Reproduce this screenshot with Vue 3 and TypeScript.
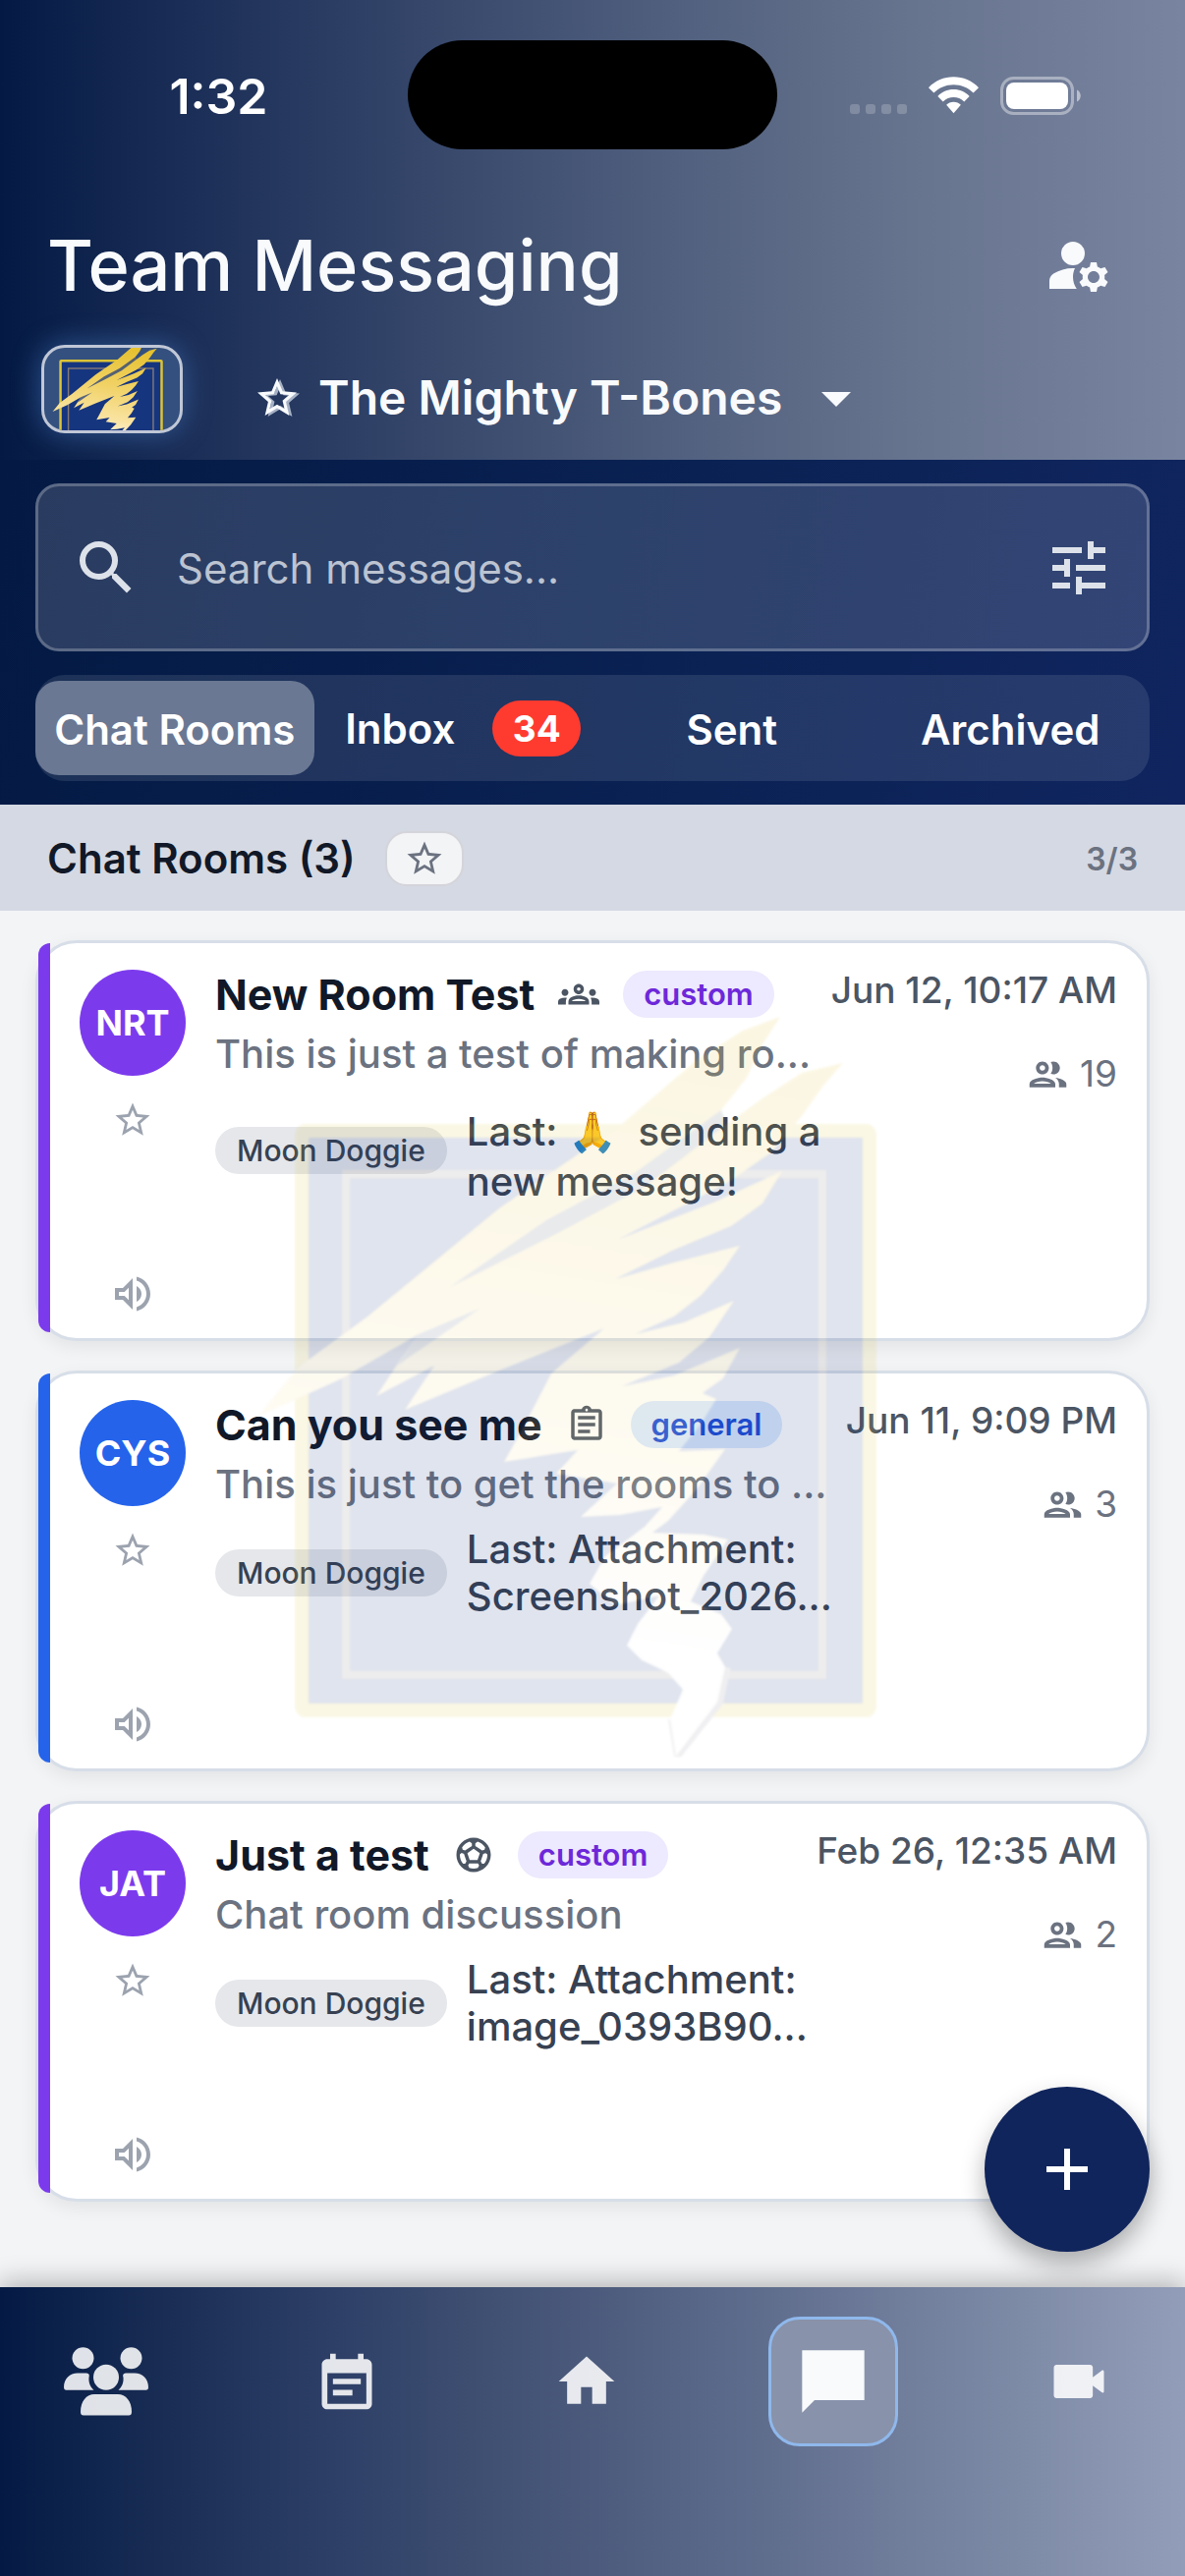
<script setup lang="ts">
import { ref } from 'vue'

interface Room {
  initials: string
  name: string
  color: string
  icon: string
  tag: string
  description: string
  sender: string
  emoji?: string
  lines: string[]
  date: string
  members: number
}

interface NavItem {
  label: string
  icon: string
}

const icons: Record<string, string> = {
  manage:
    'M10 4a4 4 0 1 0 0 8a4 4 0 1 0 0-8zM10.67 13.02C10.45 13.01 10.23 13 10 13c-2.42 0-4.68.67-6.61 1.82C2.51 15.34 2 16.32 2 17.35V20h9.26C10.47 18.87 10 17.49 10 16c0-1.07.25-2.07.67-2.98zM20.75 16c0-.22-.03-.42-.06-.63l1.14-1.01-1-1.73-1.45.49c-.32-.27-.68-.48-1.08-.63L18 11h-2l-.3 1.49c-.4.15-.76.36-1.08.63l-1.45-.49-1 1.73 1.14 1.01c-.03.21-.06.41-.06.63s.03.42.06.63l-1.14 1.01 1 1.73 1.45-.49c.32.27.68.48 1.08.63L16 21h2l.3-1.49c.4-.15.76-.36 1.08-.63l1.45.49 1-1.73-1.14-1.01c.03-.21.06-.41.06-.63zM17 18c-1.1 0-2-.9-2-2s.9-2 2-2 2 .9 2 2-.9 2-2 2z',
  star: 'M12 15.39l-3.76 2.27.99-4.28-3.32-2.88 4.38-.37L12 6.09l1.71 4.04 4.38.37-3.32 2.88.99 4.28M22 9.24l-7.19-.61L12 2 9.19 8.63 2 9.24l5.45 4.73L5.82 21 12 17.27 18.18 21l-1.64-7.03L22 9.24z',
  search:
    'M15.5 14h-.79l-.28-.27A6.471 6.471 0 0 0 16 9.5 6.5 6.5 0 1 0 9.5 16c1.61 0 3.09-.59 4.23-1.57l.27.28v.79l5 4.99L20.49 19l-4.99-5zm-6 0C7.01 14 5 11.99 5 9.5S7.01 5 9.5 5 14 7.01 14 9.5 11.99 14 9.5 14z',
  tune: 'M3 17v2h6v-2H3zM3 5v2h10V5H3zm10 16v-2h8v-2h-8v-2h-2v6h2zM7 9v2H3v2h4v2h2V9H7zm14 4v-2H11v2h10zm-6-4h2V7h4V5h-4V3h-2v6z',
  volume:
    'M3 9v6h4l5 5V4L7 9H3zm7-.17v6.34L7.83 13H5v-2h2.83L10 8.83zM16.5 12c0-1.77-1.02-3.29-2.5-4.03v8.05c1.48-.73 2.5-2.25 2.5-4.02zM14 3.23v2.06c2.89.86 5 3.54 5 6.71s-2.11 5.85-5 6.71v2.06c4.01-.91 7-4.49 7-8.77 0-4.28-2.99-7.86-7-8.77z',
  people:
    'M9 13.75c-2.34 0-7 1.17-7 3.5V19h14v-1.75c0-2.33-4.66-3.5-7-3.5zM4.34 17c.84-.58 2.87-1.25 4.66-1.25s3.82.67 4.66 1.25H4.34zM9 12c1.93 0 3.5-1.57 3.5-3.5S10.93 5 9 5 5.5 6.57 5.5 8.5 7.07 12 9 12zm0-5c.83 0 1.5.67 1.5 1.5S9.83 10 9 10s-1.5-.67-1.5-1.5S8.17 7 9 7zm7.04 6.81c1.16.84 1.96 1.96 1.96 3.44V19h4v-1.75c0-2.02-3.5-3.17-5.96-3.44zM15 12c1.93 0 3.5-1.57 3.5-3.5S16.93 5 15 5c-.54 0-1.04.13-1.5.35.63.89 1 1.98 1 3.15s-.37 2.26-1 3.15c.46.22.96.35 1.5.35z',
  groups:
    'M4 13c1.1 0 2-.9 2-2s-.9-2-2-2-2 .9-2 2 .9 2 2 2zm1.13 1.1c-.37-.06-.74-.1-1.13-.1-.99 0-1.93.21-2.78.58C.48 14.9 0 15.62 0 16.43V18h4.5v-1.61c0-.83.23-1.61.63-2.29zM20 13c1.1 0 2-.9 2-2s-.9-2-2-2-2 .9-2 2 .9 2 2 2zm4 3.43c0-.81-.48-1.53-1.22-1.85-.85-.37-1.79-.58-2.78-.58-.39 0-.76.04-1.13.1.4.68.63 1.46.63 2.29V18H24v-1.57zm-7.76-2.78c-1.17-.52-2.61-.9-4.24-.9s-3.07.39-4.24.9C6.68 14.13 6 15.21 6 16.39V18h12v-1.61c0-1.18-.68-2.26-1.76-2.74zM8.07 16c.09-.23.13-.39.91-.69.97-.38 1.99-.56 3.02-.56s2.05.18 3.02.56c.77.3.81.46.91.69H8.07zM12 8c.55 0 1 .45 1 1s-.45 1-1 1-1-.45-1-1 .45-1 1-1m0-2c-1.66 0-3 1.34-3 3s1.34 3 3 3 3-1.34 3-3-1.34-3-3-3z',
  clipboard:
    'M7 15h7v2H7zm0-4h10v2H7zm0-4h10v2H7zm12-4h-4.18C14.4 1.84 13.3 1 12 1c-1.3 0-2.4.84-2.82 2H5c-.14 0-.27.01-.4.04-.39.08-.74.28-1.01.55-.18.18-.33.4-.43.64-.1.23-.16.49-.16.77v14c0 .27.06.54.16.78s.25.45.43.64c.27.27.62.47 1.01.55.13.02.26.03.4.03h14c1.1 0 2-.9 2-2V5c0-1.1-.9-2-2-2zm-7-.25c.41 0 .75.34.75.75s-.34.75-.75.75-.75-.34-.75-.75.34-.75.75-.75zM19 19H5V5h14v14z',
  soccer:
    'M12 2C6.48 2 2 6.48 2 12s4.48 10 10 10 10-4.48 10-10S17.52 2 12 2zm1 3.3 1.35-.95c1.82.56 3.37 1.76 4.38 3.34l-.39 1.34-1.35.46L13 6.9V5.3zm-3.35-.95L11 5.3v1.6L7.01 9.49l-1.35-.46-.39-1.34c1.01-1.57 2.56-2.77 4.38-3.34zM7.08 17.11l-1.14.1C4.73 15.81 4 13.99 4 12c0-.12.01-.23.02-.35l1-.73 1.38.48 1.46 4.34-.78 1.37zm7.42 2.48c-.79.26-1.63.41-2.5.41s-1.71-.15-2.5-.41l-.69-1.49.64-1.1h5.11l.64 1.11-.7 1.48zM14.27 15H9.73l-1.35-4.02L12 8.44l3.63 2.54L14.27 15zm3.79 2.21-1.14-.1-.79-1.37 1.46-4.34 1.39-.47 1 .73c.01.11.02.22.02.34 0 1.99-.73 3.81-1.94 5.21z',
  calendar:
    'M19 4h-1V2h-2v2H8V2H6v2H5c-1.11 0-2 .9-2 2v14c0 1.1.89 2 2 2h14c1.1 0 2-.9 2-2V6c0-1.1-.9-2-2-2zm0 16H5V9h14v11zM7 11h10v2H7zM7 15h7v2H7z',
  home: 'M10 20v-6h4v6h5v-8h3L12 3 2 12h3v8z',
  chat: 'M2 2h20v16H6l-4 4z',
  video:
    'M17 10.5V7c0-.55-.45-1-1-1H4c-.55 0-1 .45-1 1v10c0 .55.45 1 1 1h12c.55 0 1-.45 1-1v-3.5l3.2 2.4c.4.3.8.1.8-.4V8.500c0-.5-.4-.7-.8-.4L17 10.500z',
}

const search = ref('')
const team = ref('bones')
const activeTab = ref('Chat Rooms')
const activeNav = ref('Messages')

const tabs: { label: string; badge?: number }[] = [
  { label: 'Chat Rooms' },
  { label: 'Inbox', badge: 34 },
  { label: 'Sent' },
  { label: 'Archived' },
]

const rooms: Room[] = [
  {
    initials: 'NRT',
    name: 'New Room Test',
    color: '#7c3aed',
    icon: 'groups',
    tag: 'custom',
    description: 'This is just a test of making ro...',
    sender: 'Moon Doggie',
    emoji: '🙏',
    lines: ['sending a', 'new message!'],
    date: 'Jun 12, 10:17 AM',
    members: 19,
  },
  {
    initials: 'CYS',
    name: 'Can you see me',
    color: '#2563eb',
    icon: 'clipboard',
    tag: 'general',
    description: 'This is just to get the rooms to ...',
    sender: 'Moon Doggie',
    lines: ['Attachment:', 'Screenshot_2026...'],
    date: 'Jun 11, 9:09 PM',
    members: 3,
  },
  {
    initials: 'JAT',
    name: 'Just a test',
    color: '#7c3aed',
    icon: 'soccer',
    tag: 'custom',
    description: 'Chat room discussion',
    sender: 'Moon Doggie',
    lines: ['Attachment:', 'image_0393B90...'],
    date: 'Feb 26, 12:35 AM',
    members: 2,
  },
]

const navItems: NavItem[] = [
  { label: 'Team', icon: 'team' },
  { label: 'Calendar', icon: 'calendar' },
  { label: 'Home', icon: 'home' },
  { label: 'Messages', icon: 'chat' },
  { label: 'Video', icon: 'video' },
]
</script>

<template>
  <div class="screen">
    <svg class="defs" aria-hidden="true">
      <defs>
        <linearGradient id="wing" gradientUnits="userSpaceOnUse" x1="560" y1="0" x2="440" y2="754">
          <stop offset="0" stop-color="#e3bd22" />
          <stop offset="0.35" stop-color="#f0d060" />
          <stop offset="0.62" stop-color="#f9e3a0" />
          <stop offset="0.85" stop-color="#ffffff" />
        </linearGradient>
        <symbol id="crest" overflow="visible">
          <rect x="81" y="117" width="578" height="590" rx="4" fill="#16357f" stroke="#dcc436" stroke-width="14" />
          <rect x="126" y="161" width="485" height="510" fill="none" stroke="#857a78" stroke-width="8" />
          <path
            fill="none"
            stroke="#8a8a9c"
            stroke-width="8"
            stroke-linejoin="round"
            d="M514 663 L506 699 L464 752 L458 716"
          />
          <path
            fill="url(#wing)"
            d="M36 408 L77 358 L148 306 L215 251 L282 196 L407 110 L483 45 L530 15 L568 1 L550 29 L534 63 L508 96 L514 110 L550 84 L590 58 L632 48 L612 71 L590 102 L559 139 L514 170 L402 228 L500 190 L570 158 L550 191 L518 214 L460 238 L400 268 L460 251 L527 234 L510 259 L487 285 L460 306 L420 324 L470 312 L521 290 L496 327 L465 353 L407 377 L460 366 L527 338 L510 369 L489 384 L503 390 L487 416 L465 443 L512 441 L483 482 L454 514 L438 526 L490 528 L515 533 L490 570 L477 596 L508 609 L519 624 L504 649 L512 663 L504 699 L462 754 L456 716 L469 686 L454 669 L427 656 L412 641 L423 619 L445 590 L400 600 L374 578 L390 550 L430 520 L448 500 L405 508 L365 510 L402 476 L340 466 L362 442 L287 454 L306 420 L335 364 L389 318 L282 361 L186 401 L216 356 L157 387 L180 352 L200 324 L120 370 Z"
          />
          <path
            fill="#16357f"
            fill-opacity="0.7"
            d="M508 96 L420 160 L330 208 L232 276 L340 222 L430 174 L514 110 Z M262 298 L200 324 L178 356 Z"
          />
        </symbol>
      </defs>
    </svg>

    <header class="header">
      <div class="status">
        <span class="clock">1:32</span>
        <span class="island"></span>
        <span class="signals">
          <span class="dots"><i></i><i></i><i></i><i></i></span>
          <svg class="wifi" viewBox="0 0 52 38" aria-hidden="true">
            <path d="M26 0C36 0 45 4 52 11L46.500 16.500C41 11 34 8 26 8S11 11 5.500 16.500L0 11C7 4 16 0 26 0Z" />
            <path d="M26 13C32.500 13 38 15.500 42.500 20L37 25.500C34 22.500 30 21 26 21S18 22.500 15 25.500L9.500 20C14 15.500 19.500 13 26 13Z" />
            <path d="M26 26C29 26 31.500 27 33.500 29L26 37.500L18.500 29C20.500 27 23 26 26 26Z" />
          </svg>
          <svg class="battery" viewBox="0 0 82 39" aria-hidden="true">
            <rect x="1.500" y="1.500" width="72" height="36" rx="12" fill="none" stroke="#fff" stroke-opacity="0.4" stroke-width="3" />
            <rect x="6" y="6" width="63" height="27" rx="8" fill="#fff" />
            <path d="M78 13.500c5 2 5 10 0 12z" fill="#fff" fill-opacity="0.5" />
          </svg>
        </span>
      </div>

      <div class="title-row">
        <h1>Team Messaging</h1>
        <button class="icon-btn" type="button" aria-label="Manage members">
          <svg class="i72" viewBox="0 0 24 24"><path :d="icons.manage" /></svg>
        </button>
      </div>

      <div class="team-row">
        <div class="logo">
          <svg viewBox="-12 43 775 472" preserveAspectRatio="xMidYMid slice" aria-hidden="true">
            <use href="#crest" />
          </svg>
        </div>
        <div class="team">
          <svg class="team-star" viewBox="0 0 24 24" aria-hidden="true"><path :d="icons.star" /></svg>
          <select v-model="team" aria-label="Team">
            <option value="bones">The Mighty T-Bones</option>
          </select>
          <svg class="i72" viewBox="0 0 24 24" aria-hidden="true"><path d="M7 10l5 5 5-5z" /></svg>
        </div>
      </div>
    </header>

    <section class="controls">
      <div class="search">
        <svg class="i72" viewBox="0 0 24 24" aria-hidden="true"><path :d="icons.search" /></svg>
        <input v-model="search" type="text" placeholder="Search messages..." aria-label="Search messages" />
        <button class="icon-btn" type="button" aria-label="Filters">
          <svg class="i72" viewBox="0 0 24 24"><path :d="icons.tune" /></svg>
        </button>
      </div>
      <nav class="tabs">
        <button
          v-for="tab in tabs"
          :key="tab.label"
          type="button"
          class="tab"
          :class="{ active: tab.label === activeTab, counted: tab.badge }"
          @click="activeTab = tab.label"
        >
          {{ tab.label }}
          <span v-if="tab.badge" class="badge">{{ tab.badge }}</span>
        </button>
      </nav>
    </section>

    <div class="summary">
      <h2>Chat Rooms (3)</h2>
      <button class="fav" type="button" aria-label="Show favorites">
        <svg viewBox="0 0 24 24"><path :d="icons.star" /></svg>
      </button>
      <span class="count">3/3</span>
    </div>

    <main class="list">
      <article v-for="room in rooms" :key="room.initials" class="card">
        <span class="stripe" :style="{ background: room.color }"></span>
        <div class="side">
          <span class="avatar" :style="{ background: room.color }">{{ room.initials }}</span>
          <button class="side-btn star" type="button" aria-label="Favorite">
            <svg viewBox="0 0 24 24"><path :d="icons.star" /></svg>
          </button>
          <button class="side-btn volume" type="button" aria-label="Mute">
            <svg viewBox="0 0 24 24"><path :d="icons.volume" /></svg>
          </button>
        </div>
        <div class="body">
          <div class="name-row">
            <h3>{{ room.name }}</h3>
            <svg viewBox="0 0 24 24" aria-hidden="true"><path :d="icons[room.icon]" /></svg>
            <span class="tag" :class="room.tag">{{ room.tag }}</span>
          </div>
          <p class="desc">{{ room.description }}</p>
          <div class="last">
            <span class="sender">{{ room.sender }}</span>
            <p class="message">
              Last: <template v-if="room.emoji"><span class="emoji">{{ room.emoji }}</span>&nbsp; </template>{{ room.lines[0] }}<br />{{ room.lines[1] }}
            </p>
          </div>
        </div>
        <div class="meta">
          <time>{{ room.date }}</time>
          <span class="members">
            <svg viewBox="0 0 24 24" aria-hidden="true"><path :d="icons.people" /></svg>
            {{ room.members }}
          </span>
        </div>
      </article>
      <button class="fab" type="button" aria-label="New chat room">
        <svg class="i72" viewBox="0 0 24 24"><path d="M19 13h-6v6h-2v-6H5v-2h6V5h2v6h6z" /></svg>
      </button>
    </main>

    <nav class="bottom">
      <button
        v-for="item in navItems"
        :key="item.label"
        type="button"
        class="nav-item"
        :class="{ active: item.label === activeNav }"
        :aria-label="item.label"
        @click="activeNav = item.label"
      >
        <svg v-if="item.icon === 'team'" class="team-icon" viewBox="0 0 86 70">
          <circle cx="19.500" cy="11.300" r="11" />
          <circle cx="68.500" cy="11.300" r="11" />
          <circle cx="43" cy="30.700" r="13" />
          <path d="M0 41C0 32 6 26.500 14 26.500H22C25 26.500 26.500 27.500 25.500 31C25 36 27 41 30.500 43.700H2Q0 43.700 0 41Z" />
          <path d="M86 41C86 32 80 26.500 72 26.500H64C61 26.500 59.500 27.500 60.500 31C61 36 59 41 55.500 43.700H84Q86 43.700 86 41Z" />
          <path d="M17 66C17 55 23 48 31 48H55C63 48 69 55 69 66Q69 69.500 66 69.500H20Q17 69.500 17 66Z" />
        </svg>
        <svg v-else viewBox="0 0 24 24"><path :d="icons[item.icon]" /></svg>
      </button>
    </nav>

    <svg class="watermark" viewBox="0 -200 754 954" aria-hidden="true">
      <use href="#crest" />
    </svg>
  </div>
</template>

<style>
body {
  margin: 0;
}
</style>

<style scoped>
.screen {
  position: relative;
  display: flex;
  flex-direction: column;
  min-height: 100vh;
  background: #f3f4f6;
  font-family: Inter, "Liberation Sans", sans-serif;
  color: #111827;
}

.screen * {
  box-sizing: border-box;
}

.defs {
  position: absolute;
  width: 0;
  height: 0;
}

h1,
h2,
h3,
p {
  margin: 0;
}

button {
  display: flex;
  align-items: center;
  justify-content: center;
  padding: 0;
  border: 0;
  background: none;
  color: inherit;
  font: inherit;
}

svg {
  display: block;
  flex: none;
  fill: currentColor;
}

.i72 {
  width: 72px;
  height: 72px;
}

.header {
  height: 468px;
  background: linear-gradient(90deg, #041a44 0%, #1b2e57 16%, #2b3d63 28%, #3e4e70 42%, #52617f 58%, #68758f 78%, #7984a0 100%);
  color: #f8fafc;
}

.status {
  display: grid;
  grid-template-columns: 1fr 376px 1fr;
  align-items: center;
  height: 192px;
}

.clock {
  padding: 4px 0 0 30px;
  color: #fff;
  font-size: 50px;
  font-weight: 600;
  line-height: 60px;
  text-align: center;
}

.island {
  height: 111px;
  border-radius: 56px;
  background: #000;
}

.signals {
  display: flex;
  align-items: center;
  padding: 2px 0 0 74px;
  color: #fff;
}

.dots {
  display: flex;
  align-items: flex-end;
  gap: 6px;
  height: 38px;
  margin-right: 22px;
}

.dots i {
  width: 10px;
  height: 10px;
  border-radius: 3px;
  background: rgba(255, 255, 255, 0.2);
}

.wifi {
  width: 51px;
  height: 38px;
  margin-right: 22px;
}

.battery {
  width: 82px;
  height: 39px;
}

.title-row {
  display: flex;
  align-items: center;
  justify-content: space-between;
  height: 156px;
  padding: 0 72px 0 48px;
}

h1 {
  font-size: 72px;
  font-weight: 500;
  line-height: 84px;
}

.team-row {
  display: flex;
  align-items: flex-start;
  padding: 3px 42px 0;
}

.logo {
  width: 144px;
  height: 90px;
  overflow: hidden;
  border: 3px solid #c0c7d6;
  border-radius: 24px;
  background: #34507e;
  box-shadow: 0 0 30px rgba(90, 150, 230, 0.45);
}

.logo svg {
  width: 100%;
  height: 100%;
}

.team {
  display: flex;
  align-items: center;
  height: 108px;
  margin-left: 72px;
}

.team-star {
  width: 48px;
  height: 48px;
  margin-right: 18px;
  filter: drop-shadow(3px 1px 0 rgba(220, 228, 240, 0.7));
}

select {
  appearance: none;
  padding: 0;
  border: 0;
  background: none;
  color: inherit;
  font: 600 48px/60px Inter, "Liberation Sans", sans-serif;
}

.team .i72 {
  margin-left: 18px;
}

.controls {
  padding: 24px 36px;
  background: linear-gradient(100deg, #041a44 0%, #0a2254 60%, #10255f 100%);
  color: #dde2ea;
}

.search {
  display: flex;
  align-items: center;
  height: 171px;
  padding: 0 33px;
  border: 3px solid rgba(255, 255, 255, 0.24);
  border-radius: 24px;
  background: rgba(255, 255, 255, 0.15);
}

.search input {
  flex: 1;
  min-width: 0;
  padding: 2px 0 0 36px;
  border: 0;
  outline: 0;
  background: none;
  color: #fff;
  font: 400 42px/60px Inter, "Liberation Sans", sans-serif;
}

.search input::placeholder {
  color: #bcc3d1;
  opacity: 1;
}

.tabs {
  display: grid;
  grid-template-columns: repeat(4, 1fr);
  margin-top: 24px;
  padding: 6px 0;
  border-radius: 30px;
  background: rgba(255, 255, 255, 0.1);
}

.tab {
  height: 96px;
  padding-top: 2px;
  border-radius: 24px;
  color: #fff;
  font-size: 42px;
  font-weight: 600;
  white-space: nowrap;
}

.tab.active {
  background: #6b7893;
}

.tab.counted {
  padding: 0 0 0 20px;
}

.badge {
  min-width: 90px;
  margin-left: 38px;
  border-radius: 30px;
  background: #ff3b30;
  font-size: 37px;
  font-weight: 700;
  line-height: 57px;
}

.summary {
  display: flex;
  align-items: center;
  height: 108px;
  padding: 2px 48px 0;
  background: #d5d9e3;
}

h2 {
  font-size: 42px;
  font-weight: 600;
  line-height: 48px;
}

.fav {
  width: 80px;
  height: 56px;
  margin-left: 30px;
  border: 2px solid #d4d4da;
  border-radius: 22px;
  background: #f3f4f6;
  color: #6b7280;
}

.fav svg {
  width: 42px;
  height: 42px;
}

.count {
  margin-left: auto;
  color: #6b7280;
  font-size: 32px;
  font-weight: 600;
}

.list {
  position: relative;
  display: flex;
  flex: 1;
  flex-direction: column;
  gap: 30px;
  padding: 30px 36px;
}

.card {
  position: relative;
  display: flex;
  min-height: 408px;
  padding: 27px 30px 21px 42px;
  border: 3px solid #d7dee8;
  border-radius: 42px;
  background: #fff;
  box-shadow: 0 6px 18px rgba(0, 0, 0, 0.07);
}

.stripe {
  position: absolute;
  top: 0;
  bottom: 6px;
  left: 0;
  width: 12px;
  border-radius: 12px 0 0 12px;
}

.side {
  display: flex;
  flex-direction: column;
  align-items: center;
  margin-right: 30px;
  color: #9ca3af;
}

.avatar {
  width: 108px;
  height: 108px;
  border-radius: 50%;
  color: #fff;
  font-size: 36px;
  font-weight: 700;
  line-height: 108px;
  text-align: center;
}

.side-btn svg {
  width: 100%;
  height: 100%;
}

.star {
  width: 42px;
  height: 42px;
  margin-top: 24px;
}

.volume {
  width: 48px;
  height: 48px;
  margin-top: auto;
}

.body {
  flex: 1;
  min-width: 0;
  white-space: nowrap;
}

.name-row {
  display: flex;
  align-items: center;
  gap: 24px;
  height: 50px;
}

h3 {
  font-size: 43px;
  font-weight: 700;
  line-height: 48px;
}

.name-row svg {
  width: 42px;
  height: 42px;
  color: #4b5563;
}

.tag,
.sender {
  flex: none;
  padding: 0 21px;
  border-radius: 24px;
  font-size: 30px;
  font-weight: 500;
  line-height: 48px;
}

.tag {
  font-size: 31px;
  font-weight: 600;
}

.tag.custom {
  background: #ede9fe;
  color: #6d28d9;
}

.tag.general {
  background: #dbeafe;
  color: #1d4ed8;
}

.desc {
  margin-top: 12px;
  color: #6b7280;
  font-size: 40px;
  font-weight: 500;
  line-height: 48px;
}

.last {
  display: flex;
  align-items: center;
  gap: 20px;
  margin-top: 18px;
}

.sender {
  padding: 0 22px;
  background: #e5e7eb;
  color: #374151;
}

.message {
  color: #374151;
  font-size: 40px;
  font-weight: 500;
  line-height: 48px;
}

.emoji {
  display: inline-block;
  padding-top: 10px;
  line-height: 54px;
}

.meta {
  display: flex;
  flex-direction: column;
  align-items: flex-end;
  gap: 40px;
}

time {
  color: #4b5563;
  font-size: 37px;
  font-weight: 500;
  line-height: 42px;
  white-space: nowrap;
}

.members {
  display: flex;
  align-items: center;
  gap: 10px;
  color: #6b7280;
  font-size: 37px;
  line-height: 48px;
}

.members svg {
  width: 45px;
  height: 45px;
}

.fab {
  position: absolute;
  right: 36px;
  bottom: 36px;
  width: 168px;
  height: 168px;
  border-radius: 50%;
  background: #10255c;
  color: #fff;
  box-shadow: 0 12px 24px rgba(0, 0, 0, 0.3);
}

.bottom {
  position: relative;
  display: flex;
  align-items: flex-start;
  justify-content: space-between;
  height: 294px;
  padding: 30px 48px 0;
  background: linear-gradient(90deg, #041a44 0%, #1b2f56 15%, #2d3f67 28%, #415173 42%, #596788 60%, #707d9b 76%, #7f8ca8 87%, #929db9 100%);
  box-shadow: 0 -6px 24px rgba(0, 0, 0, 0.25);
  color: rgba(255, 255, 255, 0.87);
}

.nav-item {
  width: 120px;
  height: 132px;
}

.nav-item svg {
  width: 68px;
  height: 68px;
}

.nav-item .team-icon {
  width: 86px;
  height: 70px;
}

.nav-item.active {
  width: 132px;
  border: 3px solid #8fb8ec;
  border-radius: 32px;
  background: #8892aa;
  color: #f8fafc;
}

.nav-item.active svg {
  width: 76px;
  height: 76px;
}

.watermark {
  position: absolute;
  top: 50%;
  left: 50%;
  width: 62.5%;
  opacity: 0.13;
  filter: blur(1px);
  pointer-events: none;
  transform: translate(-50%, -50%);
}
</style>
